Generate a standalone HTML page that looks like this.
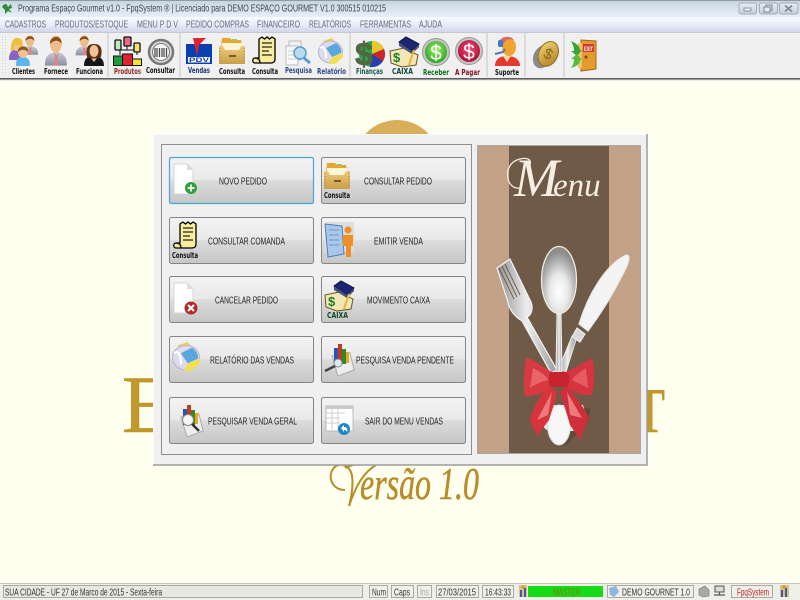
<!DOCTYPE html>
<html lang="pt">
<head>
<meta charset="utf-8">
<title>Programa Espaço Gourmet</title>
<style>
html,body{margin:0;padding:0;width:800px;height:600px;overflow:hidden;background:#fffff0}
svg{display:block;font-family:"Liberation Sans",sans-serif}
.soft{filter:blur(.3px)}
.ic{filter:blur(.35px)}
.lb{font-size:8px;font-weight:bold;fill:#111;font-family:"DejaVu Sans","Liberation Sans",sans-serif}
.mn{font-size:10px;fill:#666b7e}
.bt{font-size:10.5px;fill:#222}
.st{font-size:10.5px;fill:#333}
.big{font-family:"Liberation Serif",serif;fill:#c0982b;stroke:#c0982b;stroke-width:.6px}
</style>
</head>
<body>
<svg width="800" height="600" viewBox="0 0 800 600" xmlns="http://www.w3.org/2000/svg">
<defs>
<linearGradient id="tb" x1="0" y1="0" x2="0" y2="1"><stop offset="0" stop-color="#c6d2de"/><stop offset=".5" stop-color="#d8e3ed"/><stop offset="1" stop-color="#e6eff7"/></linearGradient>
<linearGradient id="mb" x1="0" y1="0" x2="0" y2="1"><stop offset="0" stop-color="#f8fafe"/><stop offset=".5" stop-color="#e8edf8"/><stop offset="1" stop-color="#cfd7ea"/></linearGradient>
<linearGradient id="btn" x1="0" y1="0" x2="0" y2="1"><stop offset="0" stop-color="#f3f3f3"/><stop offset=".48" stop-color="#e9e9e9"/><stop offset=".5" stop-color="#dcdcdc"/><stop offset="1" stop-color="#c6c6c6"/></linearGradient>
<linearGradient id="wb" x1="0" y1="0" x2="0" y2="1"><stop offset="0" stop-color="#e6edf4"/><stop offset="1" stop-color="#c4cfd9"/></linearGradient>
<linearGradient id="suit" x1="0" y1="0" x2="0" y2="1"><stop offset="0" stop-color="#c8ccd6"/><stop offset="1" stop-color="#8a90a0"/></linearGradient>
<linearGradient id="tan" x1="0" y1="0" x2="0" y2="1"><stop offset="0" stop-color="#eccb7c"/><stop offset="1" stop-color="#c99f4a"/></linearGradient>
<radialGradient id="green" cx=".5" cy=".4" r=".6"><stop offset="0" stop-color="#a6ee70"/><stop offset="1" stop-color="#27a51e"/></radialGradient>
<radialGradient id="red" cx=".5" cy=".4" r=".6"><stop offset="0" stop-color="#ee4f78"/><stop offset="1" stop-color="#b00c35"/></radialGradient>
<radialGradient id="spoon" cx=".5" cy=".68" r=".6"><stop offset="0" stop-color="#fff"/><stop offset=".45" stop-color="#e8e8e8"/><stop offset="1" stop-color="#8d8d8d"/></radialGradient>
<linearGradient id="silver" x1="0" y1="0" x2="1" y2="0"><stop offset="0" stop-color="#8d8d8d"/><stop offset=".5" stop-color="#eee"/><stop offset="1" stop-color="#9a9a9a"/></linearGradient>
<linearGradient id="gold" x1="0" y1="0" x2="1" y2="1"><stop offset="0" stop-color="#f5d878"/><stop offset="1" stop-color="#a87c20"/></linearGradient>
<g id="man">
<path d="M1 30C1 21 5 18 11 17L16 17C22 18 26 21 26 30Z" fill="url(#suit)"/>
<path d="M11 17L14 20L17 17L15.5 22L16.5 30H11.5L12.5 22Z" fill="#e0848c"/>
<ellipse cx="13.5" cy="9" rx="6.5" ry="8.5" fill="#eebd8a"/>
<path d="M7 9C5 1 21 -2 20 9C18 5 11 4 7 9Z" fill="#8a4f17"/>
</g>
<g id="drawer">
<path d="M3 0H11L13 2H22L24 11H2Z" fill="#eaa52e"/>
<rect x="13" y="1" width="5" height="2" fill="#9ecb55"/>
<rect x="3" y="5" width="20" height="7" fill="#fff6d8"/>
<path d="M0 8L4 8L6 12H20L22 8H26V26H0Z" fill="url(#tan)"/>
<rect x="10" y="17" width="7" height="2" fill="#7c5a20"/>
<path d="M1 10V25M25 10V25" stroke="#a98136" stroke-dasharray="1 2"/>
</g>
<g id="receipt">
<path d="M7 2L10 0L12.500 2L15 0L17.500 2L20 0L23 2V22C23 25 21 26 19 26H3C0 26 0 21 3 21H7Z" fill="#f8ed9a" stroke="#000" stroke-width="1.300"/>
<path d="M10 6H20M10 10H20M10 14H17M10 18H20" stroke="#222" stroke-width="1.200"/>
<path d="M3 21C6 21 8 22 8 26" fill="#d9c86a" stroke="#000" stroke-width="1.300"/>
</g>
<g id="page">
<path d="M3 1H16L22 7V31H3Z" fill="#fff" stroke="#d5d5d5"/>
<path d="M16 1V7H22Z" fill="#ddd"/>
</g>
<g id="printer">
<path d="M5 3L14 0L18 5L9 9Z" fill="#f0d050"/>
<ellipse cx="12.500" cy="14" rx="12" ry="11" fill="#dcdcec" stroke="#b5b5d5"/>
<path d="M8 10L18 5C22 8 24 12 23 15L14 19Z" fill="#5aa7df"/>
<path d="M14 19L25 15V19L17 26H11Z" fill="#f0e050"/>
<path d="M2 10C6 7 8 12 8 20" fill="none" stroke="#fff" stroke-width="2"/>
</g>
<g id="chartmag">
<path d="M8 12L26 9L30 26L14 32Z" fill="#eee" stroke="#aaa"/>
<rect x="10" y="4" width="4" height="16" fill="#2a55b0"/>
<rect x="14" y="0" width="4" height="19" fill="#c43a20"/>
<rect x="18" y="5" width="4" height="15" fill="#2f8a2a"/>
<rect x="22" y="8" width="3" height="11" fill="#e3a820"/>
</g>
<g id="book">
<path d="M1 14L15 11L29 18L27 28L13 30L2 26Z" fill="#f3e7b6" stroke="#6a5320"/>
<path d="M10 5L17 0L30 7L23 14Z" fill="#1c2675" stroke="#0c1240"/>
<path d="M23 14L30 7V10L23 17L10 9V5Z" fill="#48507c"/>
<path d="M25 13L20 28" stroke="#e7b936" stroke-width="2"/>
<text x="4" y="25" font-size="13" font-weight="bold" fill="#19802a" font-family="Liberation Sans,sans-serif">$</text>
</g>
<g id="plate"><rect x="0" y="0" width="144" height="46" rx="2" fill="url(#btn)" stroke="#858585"/></g>
</defs>

<!-- background -->
<rect width="800" height="600" fill="#fffff0"/>
<circle cx="397" cy="163" r="43" fill="#d9ae5a"/>
<g class="soft">
<text class="big" x="122" y="432" font-size="82">E</text>
<text class="big" x="185" y="432" font-size="62" textLength="420" lengthAdjust="spacingAndGlyphs">SPAÇO GOURME</text>
<text class="big" x="635" y="432" font-size="64" textLength="30" lengthAdjust="spacingAndGlyphs">T</text>
<text x="360" y="499" font-family="Liberation Serif,serif" font-style="italic" font-size="46" fill="#b68d28" stroke="#b68d28" stroke-width=".5" textLength="119" lengthAdjust="spacingAndGlyphs">ersão 1.0</text>
<path d="M345 490C333 490 327 478 333 469C338 462 347 464 351 472C354 480 352 495 349 506C356 485 364 472 376 465C368 462 355 463 345 468" fill="none" stroke="#b68d28" stroke-width="2"/>
</g>

<!-- title bar -->
<rect width="800" height="17" fill="url(#tb)"/>
<rect width="800" height="1" fill="#8f9aa5"/>
<g class="soft">
<path d="M2 7C4 3 7 3 8 7L11 4L12 8L9 9L12 13L8 11L5 14L5 10Z" fill="#2f8d3a"/>
<text x="18" y="11.500" font-size="10.500" fill="#3c4650" textLength="368" lengthAdjust="spacingAndGlyphs">Programa Espaço Gourmet v1.0 - FpqSystem ® | Licenciado para  DEMO ESPAÇO GOURMET V1.0 300515 010215</text>
</g>
<g>
<rect x="739" y="3" width="17.500" height="11" rx="2" fill="url(#wb)" stroke="#9fadb9"/>
<rect x="744" y="8" width="7" height="3" fill="#e8eef4" stroke="#7a848e" stroke-width=".8"/>
<rect x="759.500" y="3" width="18" height="11" rx="2" fill="url(#wb)" stroke="#9fadb9"/>
<rect x="766" y="5" width="6" height="5" fill="none" stroke="#7a848e"/>
<rect x="764" y="7" width="6" height="5" fill="#e8eef4" stroke="#7a848e"/>
<rect x="779.500" y="3" width="18.500" height="11" rx="2" fill="url(#wb)" stroke="#9fadb9"/>
<path d="M785 5.500L792 11.500M792 5.500L785 11.500" stroke="#7d8892" stroke-width="1.800"/>
</g>

<!-- menu bar -->
<rect y="17" width="800" height="15" fill="url(#mb)"/>
<g class="soft">
<text class="mn" x="5" y="27.500" textLength="41" lengthAdjust="spacingAndGlyphs">CADASTROS</text>
<text class="mn" x="55" y="27.500" textLength="73" lengthAdjust="spacingAndGlyphs">PRODUTOS/ESTOQUE</text>
<text class="mn" x="137" y="27.500" textLength="41" lengthAdjust="spacingAndGlyphs">MENU P D V</text>
<text class="mn" x="186" y="27.500" textLength="63" lengthAdjust="spacingAndGlyphs">PEDIDO COMPRAS</text>
<text class="mn" x="257" y="27.500" textLength="43" lengthAdjust="spacingAndGlyphs">FINANCEIRO</text>
<text class="mn" x="309" y="27.500" textLength="42" lengthAdjust="spacingAndGlyphs">RELATÓRIOS</text>
<text class="mn" x="360" y="27.500" textLength="51" lengthAdjust="spacingAndGlyphs">FERRAMENTAS</text>
<text class="mn" x="419" y="27.500" textLength="23" lengthAdjust="spacingAndGlyphs">AJUDA</text>
</g>

<!-- toolbar -->
<rect y="32" width="800" height="46" fill="#f0f0f0"/>
<rect y="32" width="800" height="1" fill="#c5c9d2"/>
<rect y="78" width="800" height="1.500" fill="#5a5e62"/>
<rect y="79.500" width="800" height="1" fill="#d9d9d0"/>
<path d="M2.500 36V74M5.500 36V74" stroke="#cfcfcf" stroke-dasharray="1 2"/>
<path d="M108 33V77M180 33V77M350 33V77M487 33V77M525 33V77M564 33V77" stroke="#c4c4c4"/>

<g class="ic">
<!-- clientes -->
<use href="#man" transform="translate(21,35) scale(.66)"/>
<path d="M9 60C9 52 12 50 16 49L20 49C23 51 25 54 25 60Z" fill="#8a62c2"/>
<ellipse cx="17" cy="45" rx="5" ry="6" fill="#f0c48f"/>
<path d="M11 52C10 42 14 37 18 38C23 38 23 43 23 50C20 44 16 44 14 46C14 49 13 51 11 52Z" fill="#e9c23a"/>
<path d="M16 66C16 59 18 57 23 57C28 57 30 60 30 66Z" fill="#5cb6ee"/>
<ellipse cx="23" cy="52" rx="5" ry="6" fill="#f0c48f"/>
<path d="M18 52C17 45 29 44 28 52C25 49 21 49 18 52Z" fill="#8d5a20"/>
<!-- fornece -->
<use href="#man" transform="translate(44,35) scale(.88,1.02)"/>
<!-- funciona -->
<use href="#man" transform="translate(75,35) scale(.68)"/>
<path d="M84 66C84 58 88 56 94 56C100 56 104 59 104 66Z" fill="#161616"/>
<path d="M91 58L94 62L97 58Z" fill="#efc393"/>
<path d="M87 57C85 45 90 44 94 44C99 44 103 46 101 57C99 59 89 59 87 57Z" fill="#5a2f10"/>
<ellipse cx="94" cy="51" rx="4.500" ry="6" fill="#efc393"/>
<!-- produtos -->
<path d="M120 55V50H137V55M127 50V44" stroke="#111" fill="none"/>
<rect x="115" y="40" width="6" height="10" rx="1" fill="#bdeabd" stroke="#111" stroke-width="1.300"/>
<rect x="124" y="37" width="7" height="9" rx="1" fill="#ee6a80" stroke="#111" stroke-width="1.300"/>
<rect x="134" y="43" width="6" height="9" rx="1" fill="#f6e36a" stroke="#111" stroke-width="1.300"/>
<rect x="113.500" y="56" width="9" height="9.500" fill="#1e9b3c" stroke="#111"/>
<rect x="122.500" y="54" width="10" height="11.500" fill="#e0242f" stroke="#111"/>
<rect x="132.500" y="59" width="9" height="6.500" fill="#f3e52c" stroke="#111"/>
<!-- consultar -->
<circle cx="161" cy="52" r="12" fill="#dadada" stroke="#777" stroke-width="2.500"/>
<circle cx="161" cy="52" r="8.500" fill="#f6f6f6" stroke="#777"/>
<path d="M155 48V57M157 48V57M159.500 48V57M162 48V57M164 48V57M166.500 48V57" stroke="#444" stroke-width="1.200"/>
<!-- vendas -->
<rect x="186" y="44" width="26" height="20" fill="#0b3fb0"/>
<rect x="188" y="57" width="22" height="5.500" fill="#fff"/>
<path d="M193 38H206L199 45L197 56Z" fill="#e0242f"/>
<text x="189" y="62" font-size="6.500" font-weight="bold" fill="#0b3fb0" textLength="20" lengthAdjust="spacingAndGlyphs">PDV</text>
<use href="#drawer" transform="translate(219,38)"/>
<use href="#receipt" transform="translate(252,37)"/>
<!-- pesquisa -->
<g transform="translate(285,38)">
<path d="M4 3H16V22H4Z" fill="#eef0f2" stroke="#b8bcc0"/>
<path d="M1 8H13V27H1Z" fill="#f7f8f9" stroke="#b8bcc0"/>
<path d="M3 13H11M3 17H9M3 21H11" stroke="#ccc"/>
<circle cx="15" cy="15" r="6" fill="#b7dbf1" stroke="#5a9fcb" stroke-width="1.500"/>
<path d="M19 20L25 25" stroke="#5a9fcb" stroke-width="3"/>
</g>
<use href="#printer" transform="translate(318,38)"/>
<!-- financas -->
<circle cx="372" cy="54" r="13" fill="#29a542"/>
<path d="M372 54V41A13 13 0 0 1 384 49Z" fill="#e8c72b"/>
<path d="M372 54L384 49A13 13 0 0 1 383 61Z" fill="#d0242c"/>
<path d="M372 54L383 61A13 13 0 0 1 370 67Z" fill="#2b3fa8"/>
<text x="355" y="65" font-size="32" font-weight="bold" fill="#4f6b39" stroke="#5b5b5b" stroke-width=".6" font-family="Liberation Sans,sans-serif">$</text>
<use href="#book" transform="translate(389,37)"/>
<!-- receber -->
<circle cx="436" cy="52" r="13.500" fill="#c5c5c5" stroke="#999"/>
<circle cx="436" cy="52" r="11" fill="url(#green)"/>
<text x="436" y="60" font-size="21" text-anchor="middle" fill="#fff">$</text>
<!-- pagar -->
<circle cx="469" cy="51" r="13.500" fill="#c5c5c5" stroke="#999"/>
<circle cx="469" cy="51" r="11" fill="url(#red)"/>
<text x="469" y="59" font-size="21" text-anchor="middle" fill="#fff">$</text>
<!-- suporte -->
<path d="M495 66C495 59 500 56 507 56C514 56 520 59 520 66Z" fill="#e23a2c"/>
<path d="M503 56L507 62L511 56Z" fill="#f3d8b0"/>
<ellipse cx="509" cy="47" rx="7" ry="9" fill="#f0a52e"/>
<path d="M499 44C498 37 510 34 514 40C508 38 503 41 503 47Z" fill="#d66a6a"/>
<path d="M495 54L503 52L505 49" stroke="#5577b5" stroke-width="2" fill="none"/>
<rect x="498" y="40" width="5" height="7" rx="2" fill="#3f78c4"/>
<!-- coin -->
<g transform="rotate(25 546 54)">
<ellipse cx="544" cy="58" rx="9" ry="12" fill="#8a8a8a"/>
<ellipse cx="548" cy="53" rx="9.500" ry="13" fill="url(#gold)" stroke="#8f6a1a"/>
<text x="548" y="58" font-size="15" text-anchor="middle" fill="#8d661a">$</text>
</g>
<!-- exit -->
<path d="M581 40L596 41V69L581 71Z" fill="#e39a2e" stroke="#a76a18"/>
<path d="M578 43H582V68H578Z" fill="#f3c26a"/>
<rect x="583" y="44" width="11" height="8" fill="#d13a2c"/>
<text x="584" y="51" font-size="6.500" font-weight="bold" fill="#fff" textLength="9" lengthAdjust="spacingAndGlyphs">EXIT</text>
<circle cx="586" cy="57" r="1.500" fill="#7d4b10"/>
<path d="M571 41C578 44 580 47 580 50L582 50L577 56L571 51L574 51C574 47 573 45 571 41Z" fill="#3aa33a"/>
<path d="M571 68C578 66 580 63 580 60L582 60L577 54L571 59L574 59C574 63 573 65 571 68Z" fill="#54bd3c"/>
</g>

<g class="soft">
<text class="lb" x="12" y="74" textLength="23" lengthAdjust="spacingAndGlyphs">Clientes</text>
<text class="lb" x="44" y="74" textLength="24" lengthAdjust="spacingAndGlyphs">Fornece</text>
<text class="lb" x="76" y="74" textLength="27" lengthAdjust="spacingAndGlyphs">Funciona</text>
<text class="lb" x="114" y="74" textLength="27" lengthAdjust="spacingAndGlyphs" style="fill:#8a2a22">Produtos</text>
<text class="lb" x="146" y="73" textLength="29" lengthAdjust="spacingAndGlyphs">Consultar</text>
<text class="lb" x="188" y="73" textLength="22" lengthAdjust="spacingAndGlyphs" style="fill:#153a78">Vendas</text>
<text class="lb" x="219" y="74" textLength="26" lengthAdjust="spacingAndGlyphs">Consulta</text>
<text class="lb" x="252" y="74" textLength="26" lengthAdjust="spacingAndGlyphs">Consulta</text>
<text class="lb" x="285" y="73" textLength="27" lengthAdjust="spacingAndGlyphs" style="fill:#2f4a86">Pesquisa</text>
<text class="lb" x="317" y="74" textLength="29" lengthAdjust="spacingAndGlyphs" style="fill:#2f4a86">Relatório</text>
<text class="lb" x="356" y="74" textLength="27" lengthAdjust="spacingAndGlyphs" style="fill:#0e5a4a">Finanças</text>
<text class="lb" x="392" y="74" textLength="21" lengthAdjust="spacingAndGlyphs" style="fill:#0e4a3a">CAIXA</text>
<text class="lb" x="423" y="75" textLength="26" lengthAdjust="spacingAndGlyphs" style="fill:#0e6e1e">Receber</text>
<text class="lb" x="455" y="75" textLength="25" lengthAdjust="spacingAndGlyphs" style="fill:#8a1020">A Pagar</text>
<text class="lb" x="495" y="75" textLength="24" lengthAdjust="spacingAndGlyphs">Suporte</text>
</g>

<!-- dialog -->
<rect x="153" y="134" width="494" height="331" fill="#f0f0f0"/>
<path d="M153.500 465V134.500H647" fill="none" stroke="#fafafa"/>
<path d="M153 465H647V134" fill="none" stroke="#9c9c9c" stroke-width="1.500"/>
<rect x="161.500" y="144.500" width="310" height="310" fill="#f0f0f0" stroke="#8f8f8f"/>

<!-- buttons -->
<use href="#plate" x="169.500" y="157.500"/>
<rect x="169.500" y="157.500" width="144" height="46" rx="2" fill="none" stroke="#45a9d3" stroke-width="1.200"/>
<use href="#plate" x="321.500" y="157.500"/>
<use href="#plate" x="169.500" y="217.500"/>
<use href="#plate" x="321.500" y="217.500"/>
<use href="#plate" x="169.500" y="276.500"/>
<use href="#plate" x="321.500" y="276.500"/>
<use href="#plate" x="169.500" y="336.500"/>
<use href="#plate" x="321.500" y="336.500"/>
<use href="#plate" x="169.500" y="397.500"/>
<use href="#plate" x="321.500" y="397.500"/>

<g class="soft">
<text class="bt" x="219" y="184.500" textLength="48" lengthAdjust="spacingAndGlyphs">NOVO PEDIDO</text>
<text class="bt" x="364" y="184.500" textLength="68" lengthAdjust="spacingAndGlyphs">CONSULTAR PEDIDO</text>
<text class="bt" x="208" y="244.500" textLength="77" lengthAdjust="spacingAndGlyphs">CONSULTAR COMANDA</text>
<text class="bt" x="374" y="244.500" textLength="49" lengthAdjust="spacingAndGlyphs">EMITIR VENDA</text>
<text class="bt" x="215" y="303.500" textLength="63" lengthAdjust="spacingAndGlyphs">CANCELAR PEDIDO</text>
<text class="bt" x="367" y="303.500" textLength="63" lengthAdjust="spacingAndGlyphs">MOVIMENTO CAIXA</text>
<text class="bt" x="210" y="363.500" textLength="84" lengthAdjust="spacingAndGlyphs">RELATÓRIO DAS VENDAS</text>
<text class="bt" x="356" y="363.500" textLength="98" lengthAdjust="spacingAndGlyphs">PESQUISA VENDA PENDENTE</text>
<text class="bt" x="208" y="424.500" textLength="89" lengthAdjust="spacingAndGlyphs">PESQUISAR VENDA GERAL</text>
<text class="bt" x="365" y="424.500" textLength="78" lengthAdjust="spacingAndGlyphs">SAIR DO MENU VENDAS</text>
<text class="lb" x="324" y="198" textLength="26" lengthAdjust="spacingAndGlyphs">Consulta</text>
<text class="lb" x="172" y="258" textLength="26" lengthAdjust="spacingAndGlyphs">Consulta</text>
<text class="lb" x="327" y="318" textLength="21" lengthAdjust="spacingAndGlyphs" style="fill:#0e4a2a">CAIXA</text>
</g>

<g class="ic">
<!-- novo pedido -->
<use href="#page" transform="translate(171,163)"/>
<circle cx="191" cy="188" r="6" fill="#2f9e3c"/>
<path d="M191 184.500V191.500M187.500 188H194.500" stroke="#dff5d5" stroke-width="2"/>
<use href="#drawer" transform="translate(324,163)"/>
<use href="#receipt" transform="translate(173,222)"/>
<!-- emitir -->
<rect x="325" y="222" width="29" height="30" fill="#ddd"/>
<path d="M325 224L342 226L344 254L328 257Z" fill="#a8c7ea" stroke="#4a7fbd"/>
<path d="M329 230H339M329 235H339M329 240H339M329 245H339" stroke="#6f97c7"/>
<circle cx="348" cy="230" r="3.500" fill="#f08f24"/>
<path d="M343 235H353V246H351V257H346V246H343Z" fill="#f08f24"/>
<!-- cancelar -->
<use href="#page" transform="translate(171,282)"/>
<circle cx="191" cy="308" r="6.500" fill="#b32a2a"/>
<path d="M188 305L194 311M194 305L188 311" stroke="#fff" stroke-width="2"/>
<use href="#book" transform="translate(324,281)"/>
<use href="#printer" transform="translate(172,342) scale(1.120)"/>
<!-- pesquisa pendente -->
<use href="#chartmag" transform="translate(324,344)"/>
<circle cx="338" cy="363" r="4" fill="#dcecf5" stroke="#888"/>
<path d="M335 366L325 371" stroke="#444" stroke-width="2.500"/>
<!-- pesquisar geral -->
<use href="#chartmag" transform="translate(173,405)"/>
<circle cx="188" cy="420" r="5.500" fill="#f4f6f8" stroke="#888"/>
<path d="M192 424L199 431" stroke="#333" stroke-width="2.500"/>
<!-- sair -->
<rect x="326" y="406" width="27" height="25" fill="#fff" stroke="#bbb"/>
<rect x="326" y="406" width="27" height="3" fill="#c9c9c9"/>
<path d="M326 413H345M326 418H340M326 423H340M332 409V431M338 409V431" stroke="#cfcfcf"/>
<circle cx="344" cy="429" r="6" fill="#1f86cc"/>
<path d="M341 428L344 425V427C347 427 348 429 347 432C346 430 345 430 344 430V432Z" fill="#fff"/>
</g>

<!-- menu picture -->
<g class="ic">
<rect x="477.500" y="145.500" width="163" height="308" fill="#c3a187" stroke="#a8a8a8"/>
<rect x="509" y="146" width="100" height="307" fill="#6f5a47"/>
<text y="196" font-family="Liberation Serif,serif" font-style="italic" fill="#f6eee0"><tspan x="514" font-size="54">M</tspan><tspan x="553" font-size="33">enu</tspan></text>
<path d="M520 188C505 190 503 165 517 160C525 157 532 158 530 165" fill="none" stroke="#f6eee0" stroke-width="1.300"/>
<!-- fork -->
<path d="M497 268L510 259L531 302C534 310 530 316 527 317L557 370L551 373L522 321C514 316 509 309 508 302Z" fill="url(#silver)" stroke="#f5f5f5" stroke-width="1.200"/>
<path d="M499 268L514 299M502 266L517 297M505 264L520 295" stroke="#6f5a47" stroke-width=".9"/>
<!-- knife -->
<path d="M626 255C632 255 628 265 622 276C612 296 600 315 588 331L579 324C588 295 605 265 626 255Z" fill="#f4f4f4" stroke="#e8e8e8" stroke-width="1.200"/>
<path d="M585 334L577 328L572 337L580 342Z" fill="#d8d8d8" stroke="#f5f5f5"/>
<path d="M576 340L566 372L559 368L572 336Z" fill="url(#silver)" stroke="#f5f5f5" stroke-width=".8"/>
<!-- spoon -->
<path d="M557 314H561L562 372H556Z" fill="url(#silver)" stroke="#f5f5f5" stroke-width="1"/>
<ellipse cx="559" cy="280" rx="17.500" ry="33.500" fill="url(#spoon)" stroke="#f2ebe0" stroke-width="1.300"/>
<!-- lower part -->
<path d="M549 412C546 425 549 433 552 436C556 448 568 448 572 438C578 434 590 428 590 408Z" fill="#5c4a3a"/>
<path d="M545 405C540 420 541 428 549 431L573 431C582 428 588 420 583 405Z" fill="#eee"/>
<ellipse cx="559" cy="425" rx="11.500" ry="20" fill="#f6f6f6" stroke="#d8d8d8"/>
<!-- bow -->
<path d="M549 385C540 395 532 410 530 420L537 436L549 420C552 410 556 400 557 392Z" fill="#d9333c"/>
<path d="M567 385C574 395 586 410 589 418L580 440L570 425C566 410 562 400 560 392Z" fill="#cf2f3a"/>
<path d="M552 372C540 365 532 358 526 358C524 370 523 385 525 396C535 397 545 392 552 385Z" fill="#d93a42"/>
<path d="M566 372C575 368 585 362 592 358C596 370 594 385 592 395C580 396 572 392 566 385Z" fill="#d6343e"/>
<path d="M533 368C540 372 546 375 548 380C540 382 534 385 530 388Z" fill="#e8666a"/>
<path d="M586 368C580 372 574 376 572 380C578 383 584 386 588 388Z" fill="#e55c62"/>
<rect x="549" y="372" width="20" height="15" rx="4" fill="#c6232f"/>
<path d="M537 420L552 392L548 415Z" fill="#ec7a7c"/>
<path d="M582 418L567 392L570 415Z" fill="#ec7a7c"/>
</g>

<!-- status bar -->
<rect y="583" width="800" height="17" fill="#efefe9"/>
<rect y="583" width="800" height="1" fill="#c7c7c0"/>
<g fill="#f0f0ea" stroke="#a9a9a2" stroke-width="1">
<rect x="3.500" y="585.500" width="359" height="12" fill="#e8e8e3"/>
<rect x="369.500" y="585.500" width="18" height="12"/>
<rect x="391.500" y="585.500" width="22" height="12"/>
<rect x="417.500" y="585.500" width="14" height="12"/>
<rect x="436.500" y="585.500" width="42" height="12"/>
<rect x="482.500" y="585.500" width="31" height="12"/>
<rect x="607.500" y="585.500" width="86" height="12"/>
<rect x="731.500" y="585.500" width="41" height="12"/>
</g>
<rect x="528" y="586" width="75" height="11" fill="#16dc16"/>
<g class="soft">
<text class="st" x="5" y="595.500" textLength="157" lengthAdjust="spacingAndGlyphs">SUA CIDADE - UF 27 de Marco de 2015 - Sexta-feira</text>
<text class="st" x="372" y="595.500" textLength="14" lengthAdjust="spacingAndGlyphs">Num</text>
<text class="st" x="394" y="595.500" textLength="16" lengthAdjust="spacingAndGlyphs">Caps</text>
<text class="st" x="420" y="595.500" textLength="9" lengthAdjust="spacingAndGlyphs" style="fill:#a5a5a5">Ins</text>
<text class="st" x="438" y="595.500" textLength="38" lengthAdjust="spacingAndGlyphs">27/03/2015</text>
<text class="st" x="485" y="595.500" textLength="26" lengthAdjust="spacingAndGlyphs">16:43:33</text>
<text class="st" x="553" y="595.500" textLength="27" lengthAdjust="spacingAndGlyphs" style="fill:#7f7a10">MASTER</text>
<text class="st" x="622" y="595.500" textLength="68" lengthAdjust="spacingAndGlyphs">DEMO GOURNET 1.0</text>
<text class="st" x="737" y="595.500" textLength="32" lengthAdjust="spacingAndGlyphs" style="fill:#c02020">FpqSystem</text>
</g>
<g class="ic">
<rect x="519" y="585" width="8" height="12" fill="#d9c27a"/><path d="M520 597V590H522V597M524 597V588H526V597" fill="#3f55b0"/><circle cx="523" cy="587" r="1.500" fill="#c9962a"/>
<rect x="780" y="585" width="9" height="12" fill="#d9c27a"/><path d="M781 597V590H783V597M785 597V588H787V597" fill="#3f55b0"/><circle cx="784" cy="587" r="1.500" fill="#c9962a"/>
<path d="M609 588L616 586L619 592L614 597L610 595Z" fill="#8fb6dc"/>
<path d="M699 589L705 586L709 590V596L703 597L699 595Z" fill="#a8a8a8" stroke="#777" stroke-width=".6"/>
<rect x="715" y="586" width="9" height="6" fill="#dcdcdc" stroke="#555"/>
<path d="M714 595H725M719.500 592V595" stroke="#555" stroke-width="1.200"/>
</g>
</svg>
</body>
</html>
